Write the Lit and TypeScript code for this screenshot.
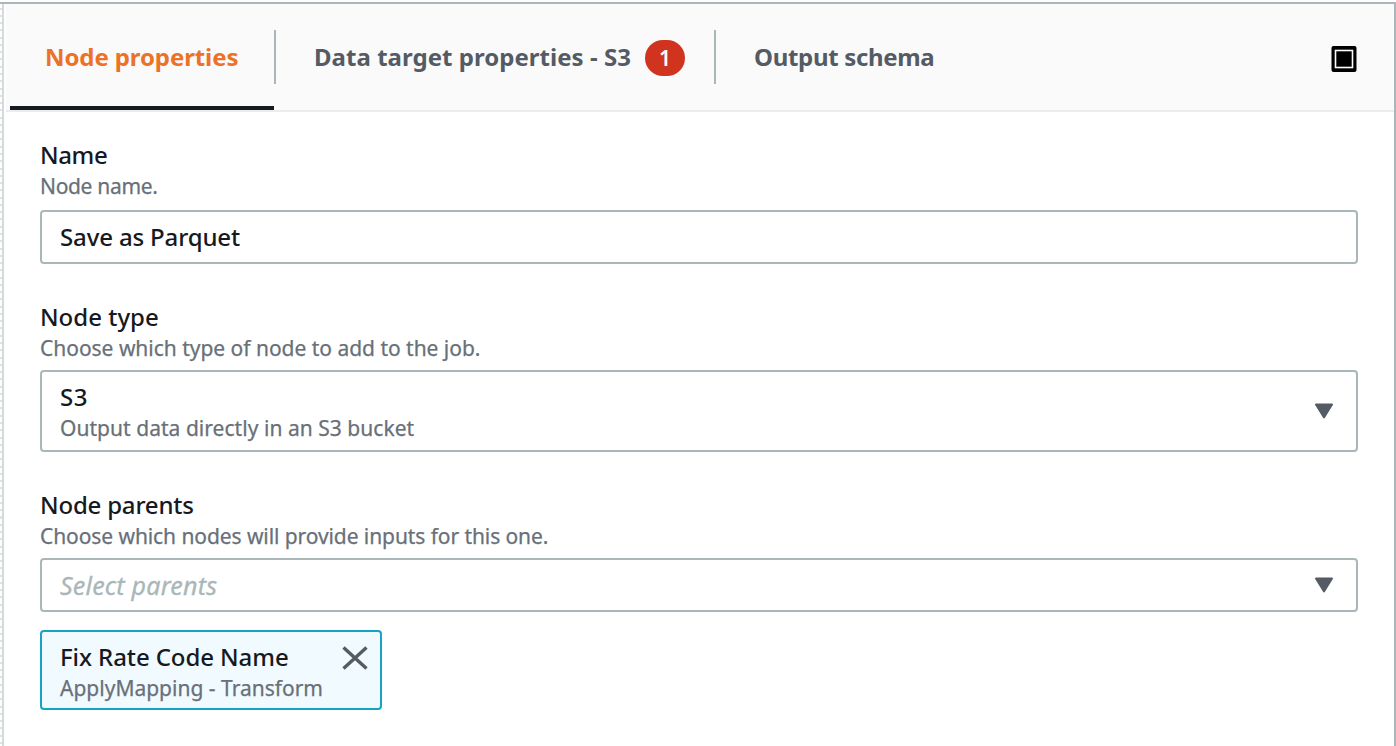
import { LitElement, html, css } from "lit";
import { customElement } from "lit/decorators.js";

@customElement("app-root")
export class AppRoot extends LitElement {
  static styles = css`
    :host { display: block; font-family: "Noto Sans", "Open Sans", sans-serif; color: #16191f; }
    * { box-sizing: border-box; }
    .page { height: 746px; display: flex; flex-direction: column; background: #fff; overflow: hidden; padding-top: 2px; }
    .rule { height: 2px; flex: none; background: #aab7b8; }
    .main { flex: 1; display: flex; min-height: 0; }
    .canvas { width: 2px; flex: none; background: repeating-linear-gradient(#fff 0 3.6px, #dfe3e3 3.6px 5.6px, #fff 5.6px 7.27px); }
    .panel { flex: 1; min-width: 0; border-left: 2px solid #d5dbdb; border-right: 2px solid #aab7b8; padding-left: 2px; }
    .tabs { display: flex; height: 108px; background: #fafafa; border-bottom: 2px solid #eaeded; padding-left: 4px; }
    .tab { display: flex; height: 106px; align-items: flex-start; font-weight: 700; font-size: 24px; line-height: 36px; color: #545b64; padding-top: 35px; white-space: nowrap; }
    .t1 { width: 264px; padding-left: 35px; color: #eb7226; border-bottom: 4px solid #16191f; letter-spacing: -0.1px; }
    .t2 { width: 438px; padding-left: 38px; letter-spacing: 0.03px; }
    .t3 { padding-left: 38px; letter-spacing: -0.32px; }
    .sep { width: 2px; height: 54px; margin-top: 26px; background: #aab7b8; }
    .badge { width: 40px; height: 36px; margin: 1px 29px 0 auto; border-radius: 18px; background: #d0341f; color: #fff; font-size: 21px; line-height: 36px; text-align: center; font-weight: 600; letter-spacing: 0; }
    .expand { margin: 41px 37px 0 auto; width: 26px; height: 28px; display: block; }
    .form { padding: 27px 36px 0 34px; }
    .title { font-size: 24px; line-height: 32px; font-weight: 500; white-space: nowrap; }
    .desc { font-size: 21px; line-height: 30px; color: #687078; white-space: nowrap; -webkit-text-stroke: 0.25px #687078; }
    .l-name { letter-spacing: -0.4px; }
    .l-name-hint { letter-spacing: -0.32px; }
    .l-value { letter-spacing: -0.14px; }
    .l-type-hint { letter-spacing: -0.02px; }
    .l-s3 { letter-spacing: 0.6px; }
    .l-s3-hint { letter-spacing: 0.04px; }
    .l-parents { letter-spacing: -0.2px; }
    .l-parents-hint { letter-spacing: -0.08px; }
    .l-token { letter-spacing: -0.09px; }
    .box { border: 2px solid #aab7b8; border-radius: 4px; display: flex; align-items: center; justify-content: space-between; padding: 0 22px 0 18px; background: #fff; }
    .short { height: 54px; }
    .name { margin: 9px 0 37px; }
    .type { height: 82px; margin: 7px 0 37px; padding-top: 2px; }
    .type .arrow { margin-bottom: 2px; }
    .parents { margin: 7px 0 18px; }
    .placeholder { font-size: 25px; line-height: 32px; margin-bottom: 1px; font-style: italic; letter-spacing: 0.2px; color: #aab7b8; -webkit-text-stroke: 0.3px #aab7b8; }
    .arrow { width: 20px; height: 18px; flex: none; fill: #545b64; }
    .token { width: 342px; height: 80px; border: 2px solid #16a3c6; border-radius: 4px; background: #f1faff; padding: 9px 11px 0 18px; display: flex; justify-content: space-between; }
    .close { width: 28px; height: 28px; margin-top: 3px; flex: none; stroke: #545b64; stroke-width: 3.4; fill: none; }
    .token .desc { margin-right: -30px; }
  `;

  arrow() {
    return html`<svg class="arrow" viewBox="0 0 20 18"><path d="M2.2 1.4H17.8Q19.8 1.4 18.7 3.2L11.1 15.6Q10 17.4 8.9 15.6L1.3 3.2Q.2 1.4 2.2 1.4Z"/></svg>`;
  }

  render() {
    return html`
      <div class="page">
        <div class="rule"></div>
        <div class="main">
          <div class="canvas"></div>
          <div class="panel">
            <div class="tabs">
              <div class="tab t1"><span>Node properties</span></div>
              <div class="sep"></div>
              <div class="tab t2"><span>Data target properties - S3</span><span class="badge">1</span></div>
              <div class="sep"></div>
              <div class="tab t3"><span>Output schema</span></div>
              <svg class="expand" viewBox="0 0 26 28"><rect x=".5" y="1" width="25" height="26" rx="2"/><rect x="4.5" y="5.5" width="17" height="17" fill="none" stroke="#fff" stroke-width="1.6"/></svg>
            </div>
            <div class="form">
              <div class="title l-name">Name</div>
              <div class="desc l-name-hint">Node name.</div>
              <div class="box short name"><span class="title l-value">Save as Parquet</span></div>
              <div class="title">Node type</div>
              <div class="desc l-type-hint">Choose which type of node to add to the job.</div>
              <div class="box type">
                <div>
                  <div class="title l-s3">S3</div>
                  <div class="desc l-s3-hint">Output data directly in an S3 bucket</div>
                </div>
                ${this.arrow()}
              </div>
              <div class="title l-parents">Node parents</div>
              <div class="desc l-parents-hint">Choose which nodes will provide inputs for this one.</div>
              <div class="box short parents"><span class="placeholder">Select parents</span>${this.arrow()}</div>
              <div class="token">
                <div>
                  <div class="title l-token">Fix Rate Code Name</div>
                  <div class="desc">ApplyMapping - Transform</div>
                </div>
                <svg class="close" viewBox="0 0 28 28"><path d="M2.5 3.5L25.5 24.5M25.5 3.5L2.5 24.5"/></svg>
              </div>
            </div>
          </div>
        </div>
      </div>`;
  }
}
